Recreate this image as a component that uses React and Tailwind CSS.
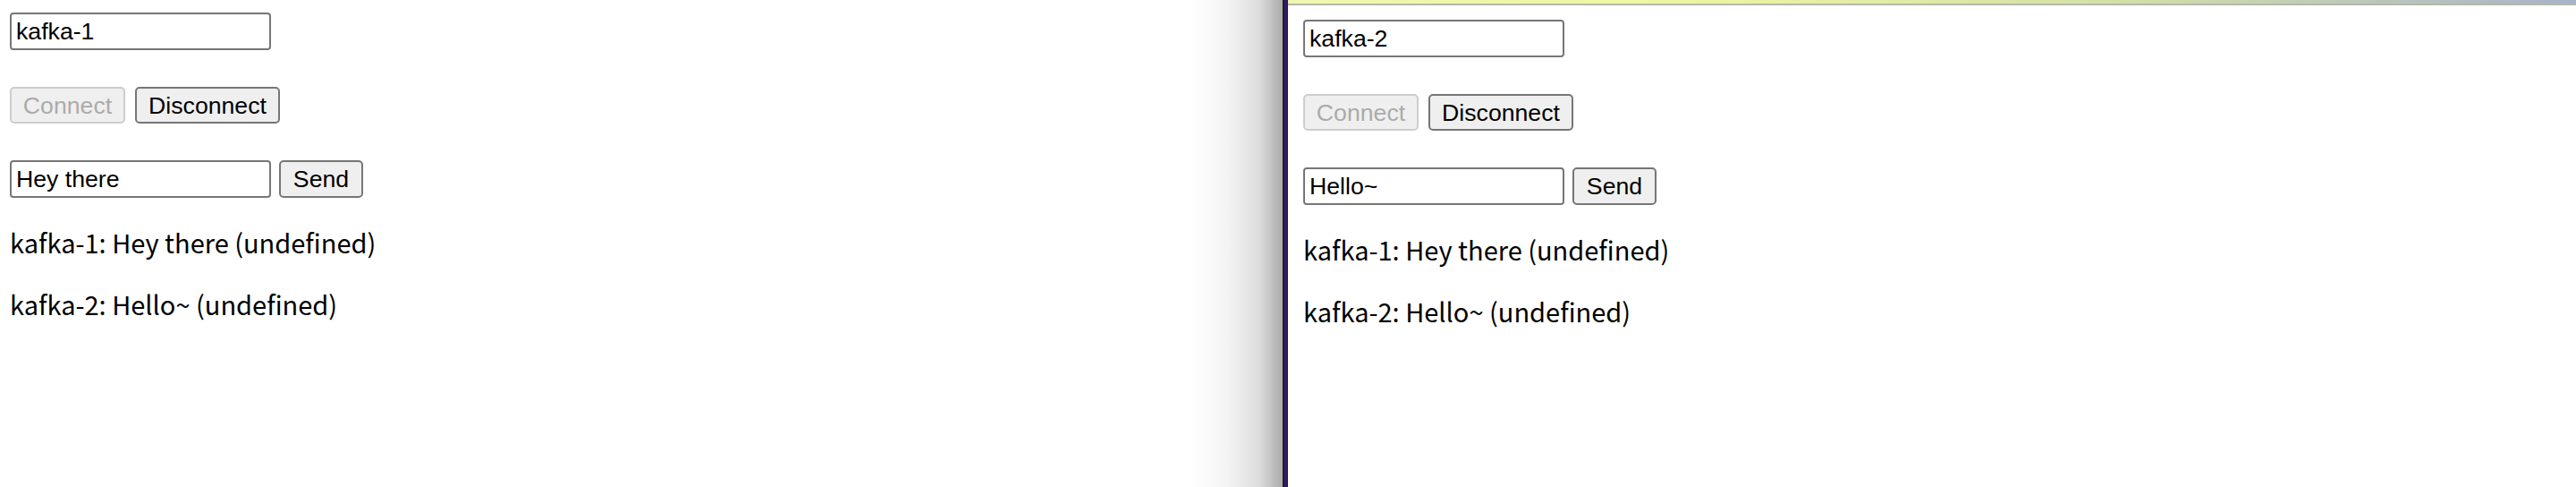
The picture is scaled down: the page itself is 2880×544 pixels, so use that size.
const ui = "font-['Liberation_Sans',Arial,sans-serif] text-[26.67px] text-black";
const field =
  "w-[292px] h-[42px] border-2 border-[#767676] rounded-[4px] px-[5px] bg-white outline-none leading-[30px] " + ui;
const btn =
  "h-[41px] border-2 rounded-[5px] bg-[#efefef] leading-[30px] text-center " + ui;
const msg =
  "font-['Noto_Sans_CJK_KR','Noto_Sans',sans-serif] text-[29px] leading-[37px] text-black";

function Chat({ name, draft }) {
  return (
    <div>
      <input className={field} defaultValue={name} />
      <div className="mt-[41px] flex">
        <button disabled className={`${btn} w-[129px] border-[#cdcdcd] !text-[#ababab]`}>
          Connect
        </button>
        <button className={`${btn} ml-[11px] w-[162px] border-[#767676]`}>
          Disconnect
        </button>
      </div>
      <div className="mt-[41px] flex">
        <input className={field} defaultValue={draft} />
        <button className={`${btn} ml-[9px] w-[94px] h-[42px] border-[#767676]`}>
          Send
        </button>
      </div>
      <p className={`mt-[31px] ${msg}`}>kafka-1: Hey there (undefined)</p>
      <p className={`mt-[32px] ${msg}`}>kafka-2: Hello~ (undefined)</p>
    </div>
  );
}

export default function App() {
  return (
    <div className="flex w-[2880px] h-[544px] bg-white overflow-hidden">
      {/* left window, partly covered */}
      <div className="flex-1 pl-[11px] pt-[14px]">
        <Chat name="kafka-1" draft="Hey there" />
      </div>
      {/* drop shadow of the front window */}
      <div className="w-[104px] h-full bg-[linear-gradient(to_right,#ffffff,#f4f4f4_40%,#dcdcdc_75%,#a9a9a9)]" />
      <div className="w-[6px] h-full border-l border-[#111] bg-[#2c1b5e]" />
      {/* right window */}
      <div className="w-[1440px] h-full flex flex-col">
        <div className="h-[4px] bg-[linear-gradient(to_right,#f2f6b0,#eef5a2_30%,#d4dfa8_65%,#a7b3ca)]" />
        <div className="h-[2px] bg-[#b3b9ab]" />
        <div className="pl-[17px] pt-[16px]">
          <Chat name="kafka-2" draft="Hello~" />
        </div>
      </div>
    </div>
  );
}
